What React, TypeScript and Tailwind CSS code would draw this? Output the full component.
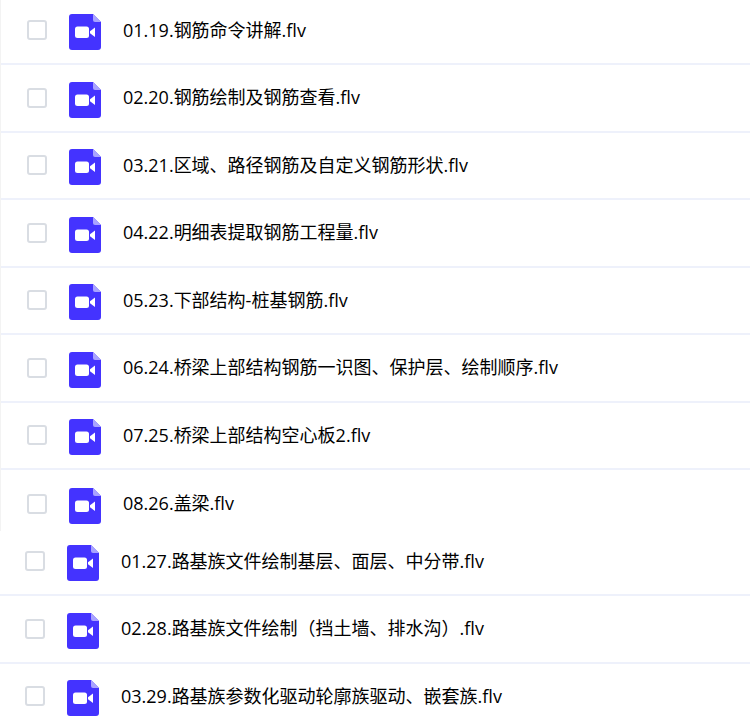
import React from 'react';

const firstList = [
  '01.19.钢筋命令讲解.flv',
  '02.20.钢筋绘制及钢筋查看.flv',
  '03.21.区域、路径钢筋及自定义钢筋形状.flv',
  '04.22.明细表提取钢筋工程量.flv',
  '05.23.下部结构-桩基钢筋.flv',
  '06.24.桥梁上部结构钢筋一识图、保护层、绘制顺序.flv',
  '07.25.桥梁上部结构空心板2.flv',
  '08.26.盖梁.flv',
];

const secondList = [
  '01.27.路基族文件绘制基层、面层、中分带.flv',
  '02.28.路基族文件绘制（挡土墙、排水沟）.flv',
  '03.29.路基族参数化驱动轮廓族驱动、嵌套族.flv',
];

function VideoIcon() {
  return (
    <svg width="32" height="36" viewBox="0 0 32 36" className="shrink-0 mt-[4px]">
      <path d="M3 0H24L32 8V33a3 3 0 0 1-3 3H3a3 3 0 0 1-3-3V3a3 3 0 0 1 3-3Z" fill="#4433ff" />
      <path d="M24 0L32 8H26a2 2 0 0 1-2-2Z" fill="#a9a3ff" />
      <rect x="6" y="12.5" width="14" height="11.5" rx="2.5" fill="#fff" />
      <path d="M21 17.2L26 13.6V22.9L21 19.3Z" fill="#fff" />
    </svg>
  );
}

function Row({ name, last }: { name: string; last?: boolean }) {
  return (
    <div className={`flex items-center h-[67.5px] ${last ? '' : 'border-b-2 border-[#eef1fb]'}`}>
      <div className="w-[20px] h-[20px] ml-[26px] mr-[22px] shrink-0 rounded-[3px] border-2 border-[#d9dde3] bg-white" />
      <VideoIcon />
      <span className="ml-[22px] text-[18px] text-black whitespace-nowrap">{name}</span>
    </div>
  );
}

export default function App() {
  return (
    <div className="w-[750px] h-[720px] overflow-hidden bg-white font-['Open_Sans','Noto_Sans_CJK_SC',sans-serif]">
      <div className="h-[531px] overflow-hidden border-l border-[#f3f3f3]">
        <div className="-mt-[2.5px]">
          {firstList.map((name, i) => (
            <Row key={name} name={name} last={i === firstList.length - 1} />
          ))}
        </div>
      </div>
      <div className="-ml-px -mt-[2.5px]">
        {secondList.map((name) => (
          <Row key={name} name={name} />
        ))}
      </div>
    </div>
  );
}
